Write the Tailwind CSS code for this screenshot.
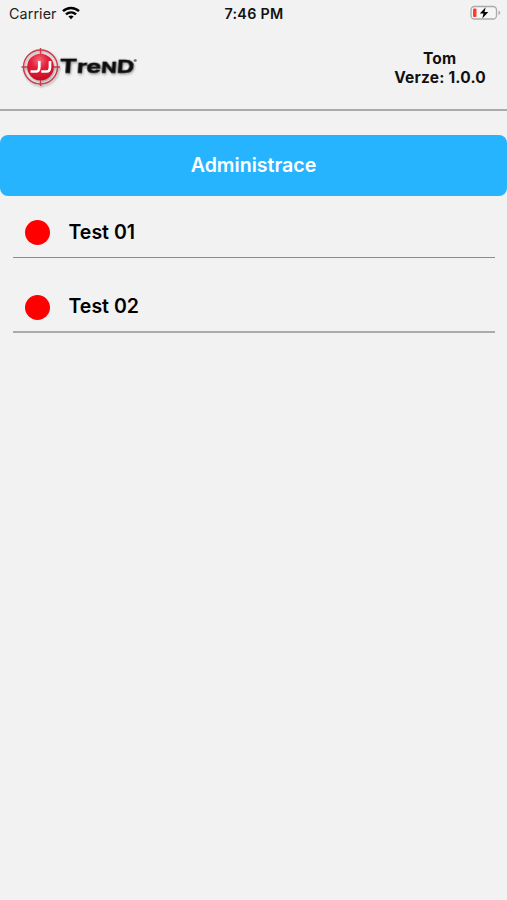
<!DOCTYPE html>
<html lang="cs">
<head>
<meta charset="utf-8">
<title>JJ Trend</title>
<script src="https://cdn.jsdelivr.net/npm/@tailwindcss/browser@4"></script>
</head>
<body class="bg-[#f2f2f2] font-['Inter','Liberation_Sans',sans-serif] text-black">
<div class="flex h-[900px] w-[507px] flex-col overflow-hidden">
  <div class="grid h-7 grid-cols-3 items-center pr-[5px] pl-[9px]">
    <div class="flex items-center gap-[5px]">
      <span class="text-[14.3px] tracking-[0.1px] text-[#222]">Carrier</span>
      <svg class="mb-[2px] h-[14px] w-[18px]" viewBox="0 0 18 14" fill="none" stroke="#000" stroke-width="2.5">
        <path d="M1 5.1C5.6.8 12.4.8 17 5.1"/>
        <path d="M4 8.4c2.9-2.7 7.100-2.700 10 0"/>
        <path d="M6.400 10.500C8 9.200 10 9.200 11.600 10.500L9 13.300Z" fill="#000" stroke="none"/>
      </svg>
    </div>
    <div class="pr-[3px] pb-px text-center text-[14.3px] font-semibold tracking-[0.3px] whitespace-nowrap text-[#111]">7:46 PM</div>
    <svg class="mb-[2px] h-4 w-8 justify-self-end" viewBox="0 0 32 16">
      <rect x="1" y="1.500" width="25.500" height="12.500" rx="3.500" fill="#f5f5f5" stroke="#aaa" stroke-width="1.300"/>
      <path d="M28.500 5.500c2.300.8 2.300 3.700 0 4.500Z" fill="#aaa"/>
      <rect x="3" y="3.500" width="3.500" height="8.500" rx="1" fill="#ff3b30"/>
      <path d="M15.700 2.200 9.800 8.500h3.700L12.300 13.500l6-6.500h-3.800Z" fill="#000"/>
    </svg>
  </div>

  <header class="flex h-[83px] items-start justify-between border-b-2 border-[#ababab] pr-[21px] pl-[18px]">
    <svg class="mt-[15px] h-[48px] w-[124px]" viewBox="0 0 124 48" role="img" aria-label="JJ Trend">
      <defs>
        <radialGradient id="ball" cx="45%" cy="25%" r="70%">
          <stop offset="0" stop-color="#f46a78"/>
          <stop offset=".45" stop-color="#e4203a"/>
          <stop offset="1" stop-color="#cc0e28"/>
        </radialGradient>
        <filter id="shadow" x="-10%" y="-10%" width="125%" height="130%">
          <feDropShadow dx="1" dy="1.500" stdDeviation="1" flood-color="#000" flood-opacity=".35"/>
        </filter>
      </defs>
      <g filter="url(#shadow)">
        <g fill="none" stroke="#cc3a4a" stroke-width="1.400">
          <circle cx="22.500" cy="24" r="17"/>
          <path d="M22.500 5v8M22.500 35v8M3.500 24h8M34 24h8"/>
        </g>
        <circle cx="22.500" cy="24" r="13.300" fill="url(#ball)"/>
        <path d="M21.300 18v6.500q-.3 4-3.300 4h-5.500M32 18v6.500q-.3 4-3.300 4h-5.500" fill="none" stroke="#fff" stroke-width="2.700"/>
      </g>
      <g filter="url(#shadow)" fill="#111" stroke="#111" stroke-width=".5" font-family="Inter, sans-serif" font-weight="700" transform="translate(41 29.800) skewX(-4)">
        <text font-size="18.500" textLength="75" lengthAdjust="spacingAndGlyphs">T<tspan font-size="17.500">re</tspan><tspan font-size="14.500">N</tspan><tspan font-size="17">D</tspan></text>
      </g>
      <text x="115.500" y="20" font-family="Inter, sans-serif" font-size="5" font-weight="700" fill="#222">®</text>
    </svg>
    <div class="mt-[21px] text-center text-[15.500px] leading-[19px] font-bold tracking-[0.200px] text-[#111]">
      <div class="pr-px">Tom</div>
      <div>Verze: 1.0.0</div>
    </div>
  </header>

  <main class="pt-6">
    <button class="flex h-[60.500px] w-full items-center justify-center rounded-[8px] bg-[#27b4ff] pt-px text-[19.600px] font-semibold text-white">Administrace</button>
    <ul class="pr-3 pl-[13px]">
      <li class="flex h-[62.500px] items-center gap-[18.500px] border-b border-[#8c8c8c] pt-[12px] pl-3">
        <span class="size-[25px] rounded-full bg-[#f00]"></span>
        <span class="text-[19.500px] font-semibold">Test 01</span>
      </li>
      <li class="mt-[13px] flex h-[62px] items-center gap-[18.500px] border-b-2 border-[#ababab] pt-[12px] pl-3">
        <span class="size-[25px] rounded-full bg-[#f00]"></span>
        <span class="text-[19.500px] font-semibold">Test 02</span>
      </li>
    </ul>
  </main>
</div>
</body>
</html>
